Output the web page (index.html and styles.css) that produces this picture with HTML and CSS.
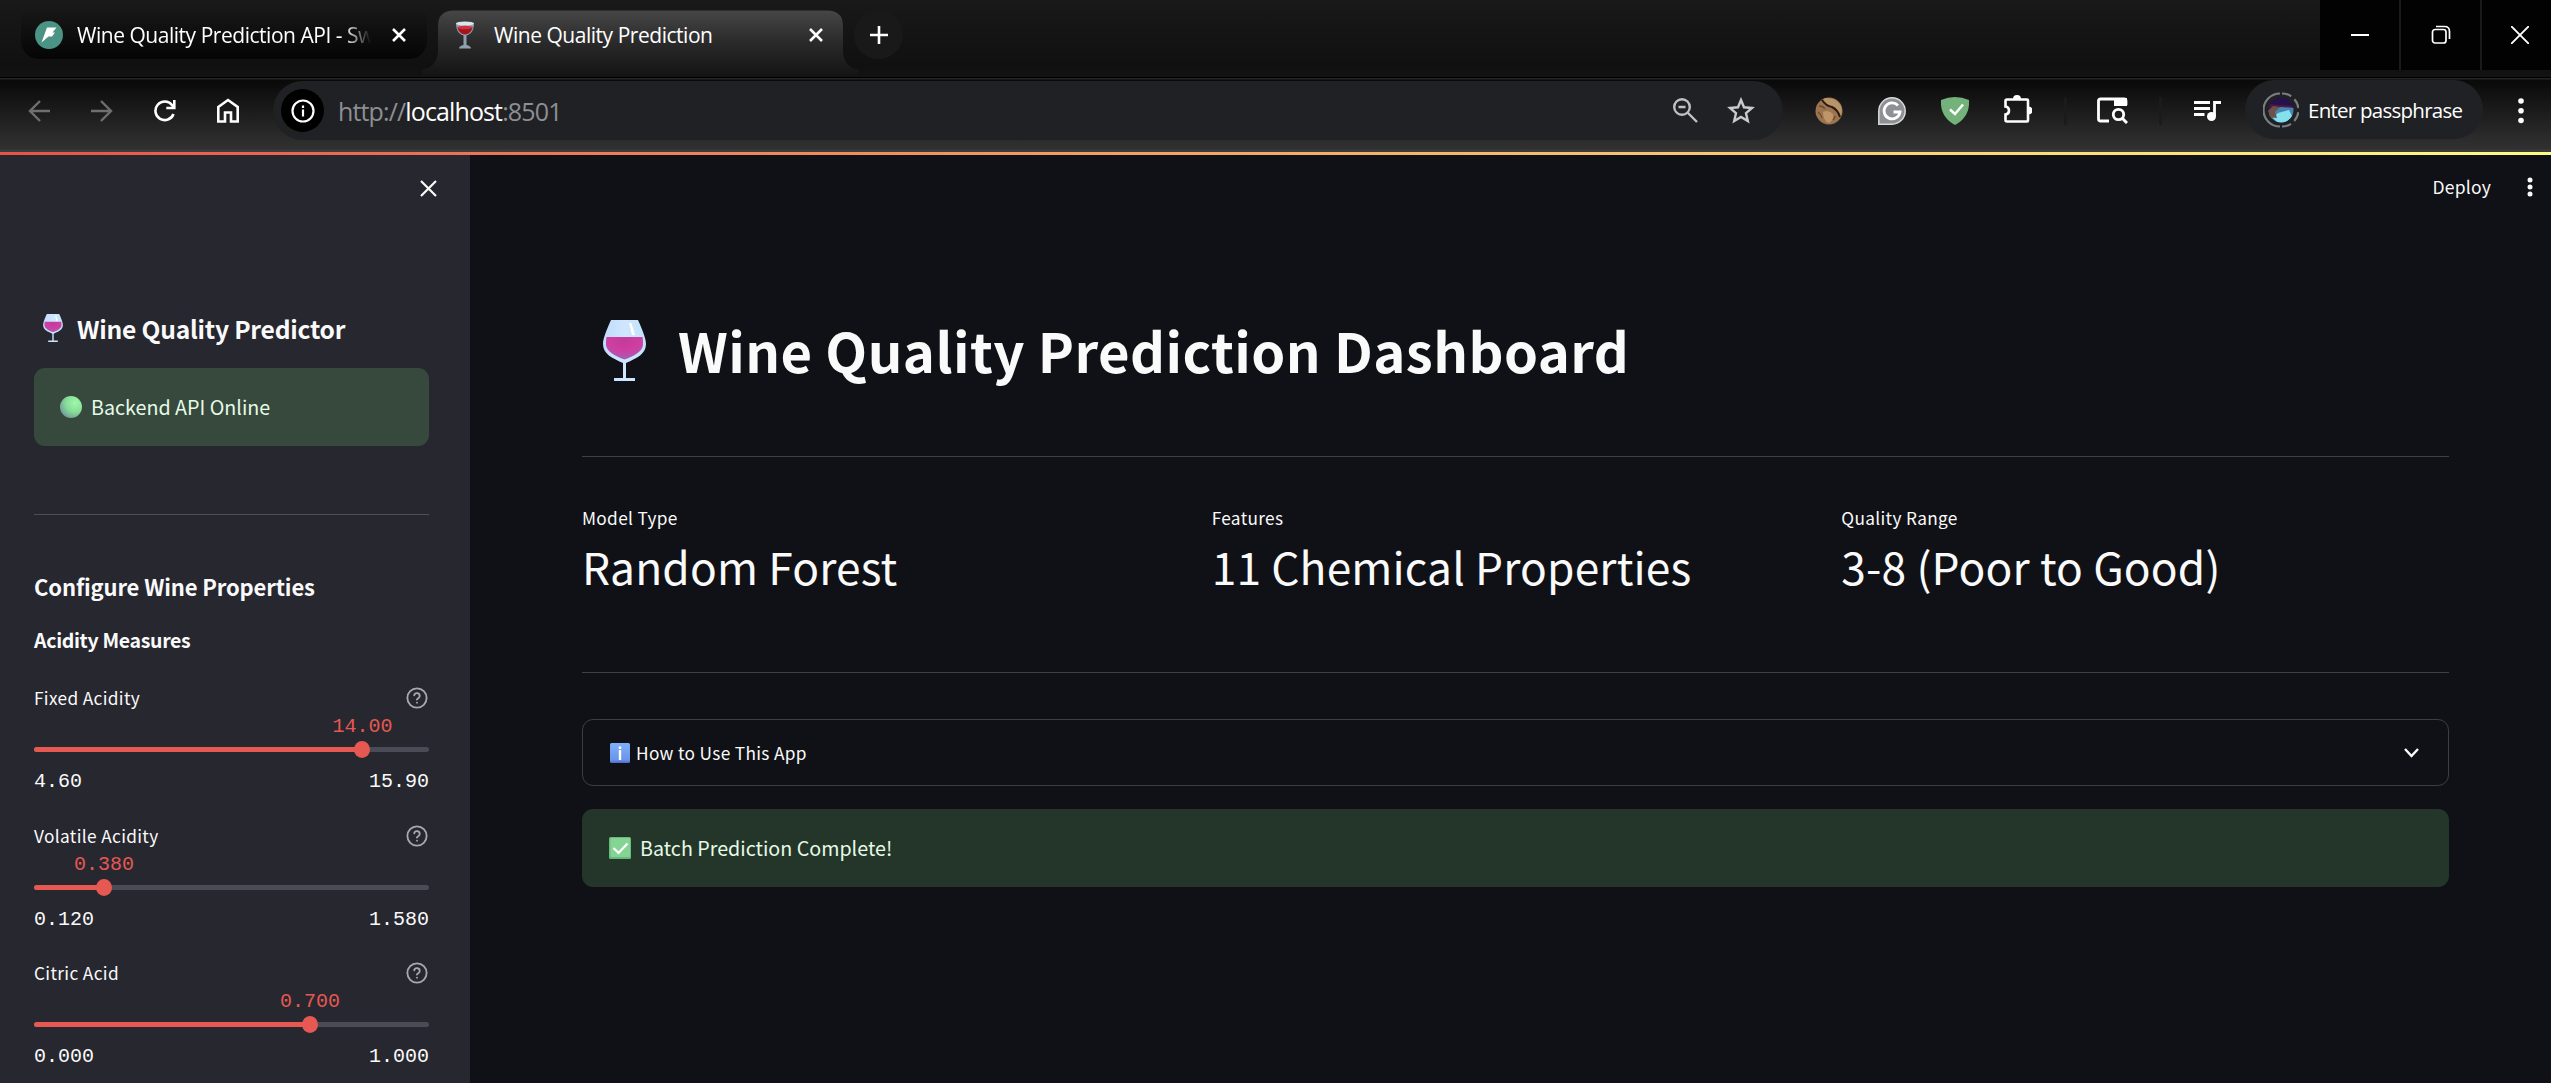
FILE: index.html
```html
<!DOCTYPE html>
<html lang="en">
<head>
<meta charset="utf-8">
<title>Wine Quality Prediction</title>
<link rel="stylesheet" href="styles.css">
</head>
<body>
<svg class="defs" width="0" height="0" aria-hidden="true">
  <defs>
    <linearGradient id="bowl" x1="0" y1="0" x2="1" y2="0"><stop offset="0" stop-color="#bfdcfb"/><stop offset=".5" stop-color="#cfe6ff"/><stop offset="1" stop-color="#c2e2f8"/></linearGradient>
    <radialGradient id="wine" cx=".5" cy=".2" r=".8"><stop offset="0" stop-color="#c43a9a"/><stop offset=".55" stop-color="#cf3fa2"/><stop offset="1" stop-color="#9a62b8"/></radialGradient>
    <radialGradient id="ball" cx=".7" cy=".3" r=".8"><stop offset="0" stop-color="#a0f8a8"/><stop offset=".55" stop-color="#86dc98"/><stop offset="1" stop-color="#6f969a"/></radialGradient>
    <linearGradient id="tabfill" x1="0" y1="0" x2="0" y2="1"><stop offset="0" stop-color="#464646"/><stop offset=".5" stop-color="#292929"/><stop offset="1" stop-color="#131313"/></linearGradient>
    <linearGradient id="blue" x1="0" y1="0" x2="0" y2="1"><stop offset="0" stop-color="#7fb0fb"/><stop offset=".85" stop-color="#6b94e8"/><stop offset="1" stop-color="#4b68cf"/></linearGradient>
    <clipPath id="face"><circle cx="18" cy="18" r="12.500"/></clipPath>
    <symbol id="glass" viewBox="0 0 43 61">
      <path d="M8 0H35C39 9 43 18 43 24C43 34 34 38 23 43V58H32V61H11V58H20V43C9 38 0 34 0 24C0 18 4 9 8 0Z" fill="url(#bowl)"/>
      <path d="M3.500 17H39.500C40 20 40 22 40 25C39 32 31 36 21.500 39.500C12 36 4 32 3 25C3 22 3 20 3.500 17Z" fill="url(#wine)"/>
      <path d="M26 3L28.500 3L32 15H29Z" fill="#fff"/>
    </symbol>
    <symbol id="help" viewBox="0 0 24 24"><g fill="none" stroke="#a9a9ad" stroke-width="2" stroke-linecap="round" stroke-linejoin="round"><circle cx="12" cy="12" r="10.500"/><path d="M9 9a3 3 0 0 1 5.900 1c0 2-3 2.600-3 3.600M12 17v.1"/></g></symbol>
    <symbol id="cross" viewBox="0 0 16 16"><path d="M2 2L14 14M14 2L2 14" fill="none" stroke="currentColor" stroke-width="2.600"/></symbol>
  </defs>
</svg>

<header class="browser">
  <div class="tabstrip">
    <div class="tab tab-idle">
      <svg width="28" height="28" viewBox="0 0 28 28"><circle cx="14" cy="14" r="14" fill="#4a9385"/><path d="M12 6.500H21.500L17.500 11.500H20L17 15.500H13.500L6.500 21.500Z" fill="#fff"/></svg>
      <span class="tab-name fade">Wine Quality Prediction API - Sw</span>
      <svg class="tab-x" width="16" height="16"><use href="#cross"/></svg>
    </div>
    <div class="tab tab-active">
      <svg class="tab-shape" width="437" height="67" viewBox="0 0 437 67"><path d="M0 60C10 58 16 52 16 40V16Q16 .5 32 .5H405Q421 .5 421 16V40C421 52 427 58 437 60V67H0Z" fill="url(#tabfill)"/></svg>
      <svg class="tab-icon" width="20" height="28" viewBox="0 0 20 28"><path d="M1 2H19C19 8 17 13 11.500 14.500V24Q16 25 16 27.500H4Q4 25 8.500 24V14.500C3 13 1 8 1 2Z" fill="#8fa1ae"/><ellipse cx="10" cy="2.500" rx="9" ry="2" fill="#dbe5ec"/><path d="M2.500 6H17.500C17 10 14.500 13 10 13.500C5.500 13 3 10 2.500 6Z" fill="#a3141f"/><ellipse cx="10" cy="6.500" rx="7.300" ry="1.700" fill="#d3313e"/></svg>
      <span class="tab-name">Wine Quality Prediction</span>
      <svg class="tab-x" width="16" height="16"><use href="#cross"/></svg>
    </div>
    <div class="newtab"><svg width="18" height="18"><path d="M9 0V18M0 9H18" stroke="#fff" stroke-width="2.600"/></svg></div>
    <div class="window-buttons">
      <div><svg width="18" height="18"><path d="M0 9H18" stroke="#fff" stroke-width="2"/></svg></div>
      <div><svg width="20" height="20" fill="none" stroke="#fff" stroke-width="1.700"><rect x="1.500" y="4.500" width="13.500" height="13.500" rx="2.500"/><path d="M5 1.500H13.500Q18.500 1.500 18.500 6.500V14"/></svg></div>
      <div><svg width="18" height="18"><path d="M0 0L18 18M18 0L0 18" stroke="#fff" stroke-width="1.900"/></svg></div>
    </div>
  </div>

  <div class="toolbar">
    <div class="slot dim"><svg width="22" height="22" fill="none" stroke="currentColor" stroke-width="2.400"><path d="M22 11H2M12 1L2 11L12 21"/></svg></div>
    <div class="slot dim"><svg width="22" height="22" fill="none" stroke="currentColor" stroke-width="2.400"><path d="M0 11H20M10 1L20 11L10 21"/></svg></div>
    <div class="slot"><svg width="22" height="22" fill="none" stroke="#fff" stroke-width="2.600"><path d="M19.500 14A9.300 9.300 0 1 1 18 5L20 7.500M20.300 0V8H12.300"/></svg></div>
    <div class="slot"><svg width="22" height="25" fill="none" stroke="#fff" stroke-width="2.600"><path d="M1.300 9L11 2L20.700 9V23.500H14V14.500H8V23.500H1.300Z"/></svg></div>
    <div class="omnibox">
      <span class="site-info"><svg width="24" height="24" fill="none" stroke="#fff" stroke-width="2.200"><circle cx="12" cy="12" r="10.500"/><path d="M12 10.500V17.500M12 6.500V9"/></svg></span>
      <span class="url">http://<b>localhost</b>:8501</span>
      <svg class="magnify" width="25" height="25" fill="none" stroke="#c0c1c3" stroke-width="2.400"><circle cx="9" cy="9" r="7.800"/><path d="M14.500 14.500L24 24M5.500 9H12.500"/></svg>
      <svg width="28" height="27" viewBox="0 0 28 27" fill="none" stroke="#c9cacc" stroke-width="2.400"><path d="M14 3L17 10.300L25 11L19 16.200L20.800 24L14 19.900L7.200 24L9 16.200L3 11L11 10.300Z"/></svg>
    </div>
    <div class="extensions">
      <div class="slot"><svg width="28" height="28"><circle cx="14" cy="14" r="13.500" fill="#9c7450"/><path d="M10 1Q25 1 27 13Q27 17 25 19Q22 12 17 10Q12 8 8 3Z" fill="#b8946a"/><path d="M7 3Q11 9 17 10Q23 13 25 20" stroke="#2e1b0e" stroke-width="2" fill="none"/><path d="M4 9Q8 9 10 12M3 15Q6 17 7 21M18 23Q20 21 20 19" stroke="#6d4a2e" stroke-width="1.300" fill="none"/><path d="M8 15Q13 12 18 17Q19 23 14 26Q8 24 8 15Z" fill="#bf966a"/></svg></div>
      <div class="slot"><svg width="28" height="28" fill="none"><path d="M.8 27.200V14A13.200 13.200 0 1 1 14 27.200Z" fill="#8e9093" stroke="#d8d9da" stroke-width="1.500"/><path d="M20 8.500A8 8 0 1 0 22 15H15.500" stroke="#fff" stroke-width="2.800"/></svg></div>
      <div class="slot"><svg width="28" height="28"><path d="M0 3Q14-3 28 3C29 16 22 24 14 28C6 24-1 16 0 3Z" fill="#74b27b"/><path d="M9 12.500L14 17L22 7.500" stroke="#fff" stroke-width="2.500" fill="none"/></svg></div>
      <div class="slot"><svg class="puzzle" width="29" height="29"><path d="M4 5.500H24Q25 5.500 25 6.500V26.500Q25 27.500 24 27.500H4Q2.500 27.500 2.500 26V20.500Q6 20 6 16.500Q6 13 2.500 12.500V7Q2.500 5.500 4 5.500Z" fill="none" stroke="#fff" stroke-width="2.600"/><path d="M10 5A4 4 0 0 1 18 5ZM25.500 12.500A4 4 0 0 1 25.500 20.500Z" fill="#fff"/></svg></div>
      <div class="divider"></div>
      <div class="slot"><svg width="31" height="27"><path d="M12 24H3.500Q1.500 24 1.500 22V4Q1.500 2 3.500 2H27Q29 2 29 4V8" fill="none" stroke="#fff" stroke-width="2.800"/><path d="M17 1H30V9H17Z" fill="#fff"/><circle cx="21.500" cy="17.500" r="5.200" fill="none" stroke="#fff" stroke-width="2.800"/><path d="M25 21L30 26" stroke="#fff" stroke-width="3"/></svg></div>
      <div class="divider"></div>
      <div class="slot"><svg width="27" height="20"><path d="M0 1.500H16M0 7.500H16M0 13.500H10.500" stroke="#fff" stroke-width="2.800"/><circle cx="17.500" cy="15.500" r="4.500" fill="#fff"/><path d="M20.500 15V1.500H27" stroke="#fff" stroke-width="2.800" fill="none"/></svg></div>
    </div>
    <div class="profile">
      <svg width="36" height="36"><g clip-path="url(#face)"><rect width="36" height="36" fill="#25124c"/><path d="M5 12L32 14V17L18 16L5 17Z" fill="#4a1747"/><path d="M5 18L18 15L32 16V36H5Z" fill="#4687b0"/><path d="M15 21L26 18L29 24L24 32L14 30L10 26Z" fill="#85e0ee"/><path d="M5 19L10 14L17 15L12 20L14 26L5 25Z" fill="#6e5147"/></g><path d="M17 1.500A16.500 16.500 0 0 0 17 34.500" fill="none" stroke="#7c7e82" stroke-width="2.200"/><path d="M19 1.500A16.500 16.500 0 0 1 19 34.500" fill="none" stroke="#7c7e82" stroke-width="2.200" stroke-dasharray="9.700 4.300"/></svg>
      <span>Enter passphrase</span>
    </div>
    <div class="menu"><svg width="6" height="26" fill="#fff"><circle cx="3" cy="3" r="2.800"/><circle cx="3" cy="12.700" r="2.800"/><circle cx="3" cy="22.500" r="2.800"/></svg></div>
  </div>
</header>

<div class="rainbow"></div>

<div class="app">
  <aside class="sidebar">
    <div class="side-head"><svg width="17" height="17"><path d="M1 1L16 16M16 1L1 16" stroke="#fafafa" stroke-width="2.200"/></svg></div>
    <h2 class="side-title"><svg width="20" height="28"><use href="#glass"/></svg><span>Wine Quality Predictor</span></h2>
    <div class="alert side-alert"><svg width="22" height="22"><circle cx="11" cy="11" r="11" fill="url(#ball)"/></svg><span>Backend API Online</span></div>
    <hr class="side-rule">
    <h3 class="side-sub"><span>Configure Wine Properties</span></h3>
    <p class="side-strong"><span>Acidity Measures</span></p>

    <div class="slider">
      <div class="slider-label"><span>Fixed Acidity</span><svg width="22" height="22"><use href="#help"/></svg></div>
      <div class="track"><div class="fill" style="width:83.150%"><i class="thumb"></i><span class="value">14.00</span></div></div>
      <div class="range"><span>4.60</span><span>15.90</span></div>
    </div>
    <div class="slider">
      <div class="slider-label"><span>Volatile Acidity</span><svg width="22" height="22"><use href="#help"/></svg></div>
      <div class="track"><div class="fill" style="width:17.700%"><i class="thumb"></i><span class="value">0.380</span></div></div>
      <div class="range"><span>0.120</span><span>1.580</span></div>
    </div>
    <div class="slider">
      <div class="slider-label"><span>Citric Acid</span><svg width="22" height="22"><use href="#help"/></svg></div>
      <div class="track"><div class="fill" style="width:69.900%"><i class="thumb"></i><span class="value">0.700</span></div></div>
      <div class="range"><span>0.000</span><span>1.000</span></div>
    </div>
  </aside>

  <main class="main">
    <div class="app-head"><span>Deploy</span><svg width="6" height="20" fill="#fafafa"><circle cx="3" cy="3" r="2.500"/><circle cx="3" cy="10" r="2.500"/><circle cx="3" cy="17" r="2.500"/></svg></div>
    <div class="content">
      <h1><svg width="43" height="61"><use href="#glass"/></svg><span>Wine Quality Prediction Dashboard</span></h1>
      <hr>
      <div class="metrics">
        <div><div class="metric-label">Model Type</div><div class="metric-value">Random Forest</div></div>
        <div><div class="metric-label">Features</div><div class="metric-value">11 Chemical Properties</div></div>
        <div><div class="metric-label">Quality Range</div><div class="metric-value">3-8 (Poor to Good)</div></div>
      </div>
      <hr>
      <div class="expander">
        <svg width="20" height="20"><rect width="20" height="20" rx="1.500" fill="url(#blue)"/><path d="M10 7V17M10 3.500V6" stroke="#fff" stroke-width="2.400"/></svg>
        <span>How to Use This App</span>
        <svg class="chevron" width="15" height="10"><path d="M1 1L7.500 8L14 1" fill="none" stroke="#fafafa" stroke-width="2.400"/></svg>
      </div>
      <div class="alert main-alert"><svg width="22" height="22"><rect width="22" height="22" rx="1.500" fill="#69b882"/><rect x="1.500" y="1" width="19.500" height="19" rx="1" fill="#84d593"/><path d="M4.500 11L9.500 16L18.500 6.500" fill="none" stroke="#fff" stroke-width="2.200"/></svg><span>Batch Prediction Complete!</span></div>
    </div>
  </main>
</div>
</body>
</html>
```

FILE: styles.css
```css
* { box-sizing: border-box; margin: 0; }
body {
  width: 2551px; height: 1083px; overflow: hidden;
  display: flex; flex-direction: column;
  background: #101116; color: #fafafa;
  font-family: "Noto Sans CJK JP", "Noto Sans", sans-serif;
}
svg { display: block; flex: none; }
span { white-space: nowrap; }
.defs { position: absolute; }

/* browser chrome */
.browser { font-family: "Open Sans", "Noto Sans", sans-serif; color: #fff; }
.tabstrip {
  height: 77px; display: flex; padding-left: 21px;
  background: linear-gradient(#191919, #101010 85%, #131313);
}
.tab { height: 49px; margin-top: 10px; display: flex; align-items: center; position: relative; }
.tab > * { position: relative; }
.tab-idle {
  width: 406px; padding: 0 20px 0 14px; margin-right: 11px;
  border-radius: 8px 8px 18px 18px;
  background: linear-gradient(#171717, #050505);
}
.tab-name { font-size: 21px; line-height: 30px; letter-spacing: -0.47px; }
.tab-idle .tab-name { margin-left: 14px; width: 294px; overflow: hidden; }
.fade { -webkit-mask-image: linear-gradient(90deg, #000 91%, transparent); mask-image: linear-gradient(90deg, #000 91%, transparent); }
.tab-x { margin-left: auto; }
.tab-active { width: 405px; padding: 0 19px 0 17px; }
.tab-active .tab-shape { position: absolute; left: -16px; top: 0; }
.tab-active .tab-name { margin-left: 19px; }
.newtab {
  width: 49px; height: 49px; margin: 10px 0 0 11px; border-radius: 50%;
  background: #191919; display: grid; place-items: center;
}
.window-buttons { height: 70px; margin-left: auto; display: flex; background: #1a1a1a; gap: 2px; }
.window-buttons div { width: 79px; background: #020202; display: grid; place-items: center; }
.window-buttons div:last-child { width: 69px; padding-left: 6px; }

.toolbar {
  height: 75px; display: flex; align-items: flex-start; padding: 4px 0 0 7px;
  background: linear-gradient(#000 0, #000 1px, #262626 1px, #262626 2px, #090909 3px, #2f2f2f 90%, #303030 72px, #3b3b3b 73px);
}
.slot { width: 63px; height: 59px; display: grid; place-items: center; }
.dim { color: #6f6f6f; }
.omnibox {
  width: 1510px; height: 59px; margin-left: 14px; padding: 0 28px 0 8px;
  border-radius: 30px; background: #202124;
  display: flex; align-items: center;
}
.site-info { width: 43px; height: 43px; border-radius: 50%; background: #000; display: grid; place-items: center; }
.url { font-size: 25px; line-height: 36px; margin-left: 14px; color: #8d8f92; letter-spacing: -0.87px; }
.url b { font-weight: 400; color: #fff; }
.magnify { margin-left: auto; margin-right: 29px; }
.extensions { display: flex; align-items: center; margin-left: 14px; }
.puzzle { margin-top: -4px; }
.divider { width: 3px; height: 28px; margin: 0 14px 0 15px; background: #1b1b1b; border-radius: 2px; }
.profile {
  width: 238px; height: 59px; margin: -1px 0 0 6px; padding-left: 18px;
  border-radius: 30px; background: #202124;
  display: flex; align-items: center; gap: 9px;
}
.profile span { font-size: 20.500px; line-height: 30px; letter-spacing: -0.74px; }
.menu { height: 59px; margin-left: 35px; display: flex; align-items: center; }
.rainbow { height: 3px; background: linear-gradient(90deg, #e8534b, #f6b46c 55%, #fffd80); }

/* application */
.app { flex: 1; min-height: 0; display: flex; }
.sidebar { width: 470px; padding: 0 41px 0 34px; background: #272730; }
.side-head { height: 66px; display: flex; justify-content: flex-end; align-items: center; margin-right: -8px; }
.side-title {
  height: 46px; margin-top: 84px; padding-left: 9px;
  display: flex; align-items: center; gap: 14px;
  font-size: 24.600px; line-height: 46px; letter-spacing: -0.22px;
}
.alert { height: 78px; border-radius: 11px; display: flex; align-items: center; color: #e4fbe6; font-size: 19.700px; line-height: 30px; gap: 9px; }
.side-alert { margin-top: 17px; padding-left: 26px; background: #37483d; }
hr { border: 0; height: 1px; background: #3f4044; }
.side-rule { margin-top: 68px; background: #4d4f50; }
.side-sub { margin-top: 55px; font-size: 22px; line-height: 32px; letter-spacing: -0.13px; }
.side-strong { margin-top: 24px; font-size: 19.500px; line-height: 28px; font-weight: 700; letter-spacing: -0.32px; }
.slider { height: 137.600px; }
.side-strong + .slider { margin-top: 33px; }
.slider-label {
  height: 22px; padding-right: 1px;
  display: flex; justify-content: space-between; align-items: center;
  font-size: 17.250px; line-height: 22px; letter-spacing: .35px;
}
.track { height: 5px; margin-top: 38px; border-radius: 3px; background: #4b4b55; }
.fill { height: 5px; position: relative; border-radius: 3px; background: #e65852; }
.thumb { position: absolute; right: -8px; top: -6px; width: 16px; height: 17px; border-radius: 50%; background: #e65852; }
.value { position: absolute; right: -30px; top: -32px; width: 60px; text-align: center; color: #e65852; }
.value, .range { font-family: "Liberation Mono", monospace; font-size: 20px; line-height: 24px; }
.range { margin-top: 18px; display: flex; justify-content: space-between; }

.main { flex: 1; display: flex; flex-direction: column; }
.app-head {
  height: 64px; padding-right: 18px;
  display: flex; justify-content: flex-end; align-items: center; gap: 36px;
  font-size: 17.500px; line-height: 26px; letter-spacing: .2px;
}
.content { padding: 86px 102px 0 112px; }
h1 { height: 90px; padding-left: 21px; display: flex; align-items: center; gap: 32px; font-size: 54.400px; line-height: 90px; letter-spacing: .45px; }
h1 + hr { margin-top: 61px; }
.metrics { display: grid; grid-template-columns: repeat(3, 1fr); gap: 22px; margin-top: 47px; height: 168px; }
.metric-label { font-size: 17.250px; line-height: 28px; letter-spacing: .33px; }
.metric-value { font-size: 44.300px; line-height: 60px; margin-top: 4px; letter-spacing: .15px; }
.expander {
  height: 67px; margin-top: 46px; padding: 0 29px 0 27px;
  border: 1px solid #3d3e42; border-radius: 11px;
  display: flex; align-items: center; gap: 6px;
  font-size: 17.250px; letter-spacing: .34px;
}
.chevron { margin-left: auto; }
.main-alert { margin-top: 23px; padding-left: 27px; background: #243629; }
```
